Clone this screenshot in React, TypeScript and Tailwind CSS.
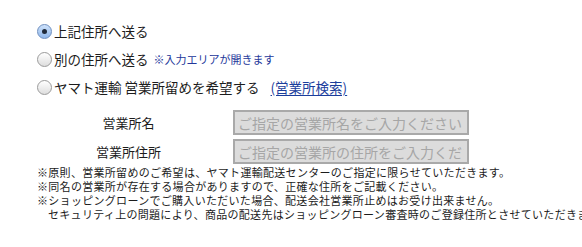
import { useState } from "react";

const font = { fontFamily: '"Noto Sans CJK JP", "Noto Sans", sans-serif' };

function Radio({ checked, onClick }: { checked: boolean; onClick: () => void }) {
  return (
    <span
      onClick={onClick}
      className={
        checked
          ? "relative inline-flex items-center justify-center size-[15px] rounded-full border border-[#6f8fbf] bg-gradient-to-b from-[#cfe3fb] to-[#8fb6ea] shrink-0 mr-[2px]"
          : "relative inline-flex items-center justify-center size-[15px] rounded-full border border-[#9a9a9a] bg-gradient-to-b from-white to-[#dedede] shrink-0 mr-[2px]"
      }
    >
      {checked && <span className="size-[5px] rounded-full bg-[#1f2a3a]" />}
    </span>
  );
}

export default function App() {
  const [choice, setChoice] = useState(0);

  return (
    <div className="w-[582px] h-[247px] overflow-hidden bg-white text-[#1c1c1c] pt-[17px] pl-[37px]" style={font}>
      {/* delivery destination choices */}
      <div className="flex flex-col text-[13.5px]">
        <div className="h-[28px] flex items-center">
          <Radio checked={choice === 0} onClick={() => setChoice(0)} />
          <span>上記住所へ送る</span>
        </div>
        <div className="h-[28px] flex items-center">
          <Radio checked={choice === 1} onClick={() => setChoice(1)} />
          <span>別の住所へ送る</span>
          <span className="ml-[5px] text-[11px] text-[#23379a]">※入力エリアが開きます</span>
        </div>
        <div className="h-[28px] flex items-center">
          <Radio checked={choice === 2} onClick={() => setChoice(2)} />
          <span>ヤマト運輸 営業所留めを希望する</span>
          <a href="#" className="ml-[11px] text-[#1b3d9c] underline underline-offset-2">(営業所検索)</a>
        </div>
      </div>

      {/* sales office fields */}
      <div className="mt-[9px] flex flex-col gap-[4px]">
        <div className="flex items-center">
          <div className="w-[183px] text-center text-[13px]">営業所名</div>
          <input
            readOnly
            placeholder="ご指定の営業所名をご入力ください"
            className="ml-[13px] w-[236px] h-[25px] border-2 border-[#a9a9a9] bg-[#dcdcdc] px-[3px] text-[14px] placeholder:text-[#a6a6a6] outline-none"
          />
        </div>
        <div className="flex items-center">
          <div className="w-[183px] text-center text-[13px]">営業所住所</div>
          <input
            readOnly
            placeholder="ご指定の営業所の住所をご入力ください"
            className="ml-[13px] w-[236px] h-[25px] border-2 border-[#a9a9a9] bg-[#dcdcdc] px-[3px] text-[14px] placeholder:text-[#a6a6a6] outline-none"
          />
        </div>
      </div>

      {/* notes */}
      <div className="mt-[1px] flex flex-col text-[11px] leading-[14px] tracking-[0.3px] whitespace-nowrap">
        <p>※原則、営業所留めのご希望は、ヤマト運輸配送センターのご指定に限らせていただきます。</p>
        <p>※同名の営業所が存在する場合がありますので、正確な住所をご記載ください。</p>
        <p>※ショッピングローンでご購入いただいた場合、配送会社営業所止めはお受け出来ません。</p>
        <p className="pl-[11px]">セキュリティ上の問題により、商品の配送先はショッピングローン審査時のご登録住所とさせていただきます。</p>
      </div>
    </div>
  );
}
